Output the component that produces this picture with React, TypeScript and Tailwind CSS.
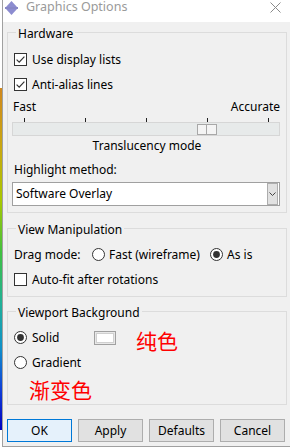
import React from "react";

function CheckBox({ checked }: { checked: boolean }) {
  return (
    <svg width="13" height="13" viewBox="0 0 13 13" className="shrink-0">
      <rect x="0.5" y="0.5" width="12" height="12" fill="#fff" stroke="#333" />
      {checked && (
        <path d="M2.6 6.6 L5.2 9.2 L10.4 3.6" fill="none" stroke="#333" strokeWidth="1.2" />
      )}
    </svg>
  );
}

function Radio({ checked }: { checked: boolean }) {
  return (
    <svg width="13" height="13" viewBox="0 0 13 13" className="shrink-0">
      <circle cx="6.5" cy="6.5" r="6" fill="#fff" stroke="#333" />
      {checked && <circle cx="6.5" cy="6.5" r="3.4" fill="#333" />}
    </svg>
  );
}

function Group({ label, children, className }: { label: string; children: React.ReactNode; className: string }) {
  return (
    <div className={"relative ml-[4px] w-[280px] border border-[#dcdcdc] " + className}>
      <span className="absolute left-[8px] top-[-7px] px-[2px] bg-[#f0f0f0] whitespace-nowrap">{label}</span>
      {children}
    </div>
  );
}

function Btn({ label, primary }: { label: string; primary?: boolean }) {
  return (
    <div
      className={
        "w-[65px] h-[23px] flex items-center justify-center border " +
        (primary ? "border-[#0078d7] bg-[#e5f1fb]" : "border-[#adadad] bg-[#e1e1e1]")
      }
    >
      {label}
    </div>
  );
}

export default function App() {
  return (
    <div className="w-[290px] h-[448px] bg-white flex overflow-hidden font-['Noto_Sans','Noto_Sans_CJK_SC',sans-serif] text-[12px] leading-[16px] text-black">
      <div className="w-[2px] flex flex-col shrink-0">
        <div className="h-[88px] bg-white" />
        <div className="h-[342px] bg-[linear-gradient(to_bottom,#d0881e,#c8a810_18%,#a8c800_33%,#40c040_48%,#20b098_63%,#1090c8_76%,#1040d8_88%,#0000c0)]" />
      </div>
      <div className="w-[288px] h-[447px] border-l border-b border-[#a0a0a0] bg-[#f0f0f0] flex flex-col shrink-0">
        {/* title bar */}
        <div className="h-[22px] bg-white flex items-start shrink-0">
          <svg width="13" height="14" viewBox="0 0 13 14" className="ml-[2px] mt-[1px] shrink-0">
            <path d="M6.5 0 L12 6 L1 6 Z" fill="#8c8cd0" />
            <rect x="0" y="6.2" width="13" height="1.6" fill="#6a6ab8" />
            <path d="M1 8 L12 8 L6.5 14 Z" fill="#8c8cd0" />
          </svg>
          <span className="ml-[8px] mt-[-1px] text-[12.5px] leading-[15px] text-[#9a9a9a] whitespace-nowrap">Graphics Options</span>
          <svg width="11" height="11" viewBox="0 0 11 11" className="ml-auto mr-[9px] mt-[2px] shrink-0">
            <path d="M0.5 0.5 L10.5 10.5 M10.5 0.5 L0.5 10.5" stroke="#8a8a8a" strokeWidth="1" />
          </svg>
        </div>

        {/* Hardware */}
        <Group label="Hardware" className="mt-[10px] pt-[14px] pb-[6px]">
          <div className="h-[25px] flex items-center pl-[6px]">
            <CheckBox checked />
            <span className="ml-[5px]">Use display lists</span>
          </div>
          <div className="h-[25px] flex items-center pl-[6px]">
            <CheckBox checked />
            <span className="ml-[5px]">Anti-alias lines</span>
          </div>
          <div className="mt-[2px] h-[16px] flex justify-between pl-[5px] pr-[6px]">
            <span>Fast</span>
            <span>Accurate</span>
          </div>
          <div className="mt-[3px] ml-[16px] w-[245px] h-[4px] flex justify-between">
            <div className="w-[1px] h-[4px] bg-[#222]" />
            <div className="w-[1px] h-[4px] bg-[#222]" />
            <div className="w-[1px] h-[4px] bg-[#222]" />
            <div className="w-[1px] h-[4px] bg-[#222]" />
            <div className="w-[1px] h-[4px] bg-[#222]" />
          </div>
          <div className="relative ml-[4px] w-[268px] h-[14px] border border-[#d6d6d6] bg-[#e7eaea]">
            <div className="absolute left-[184px] top-[1px] w-[20px] h-[11px] flex border border-[#a8a8a8] bg-[#f4f4f4]">
              <div className="w-[9px] h-full border-r border-[#a8a8a8]" />
              <div className="flex-1 h-full" />
            </div>
          </div>
          <div className="mt-[2px] h-[16px] text-center">Translucency mode</div>
          <div className="mt-[8px] h-[16px] pl-[6px]">Highlight method:</div>
          <div className="mt-[4px] ml-[4px] w-[268px] h-[24px] border border-[#a0a0a0] bg-white flex items-center">
            <span className="pl-[3px]">Software Overlay</span>
            <div className="ml-auto mr-[1px] w-[11px] h-full border border-[#adadad] bg-[#e1e1e1] flex items-center justify-center">
              <svg width="7" height="4" viewBox="0 0 7 4">
                <path d="M0.5 0.5 L3.5 3.5 L6.5 0.5" fill="none" stroke="#444" strokeWidth="1" />
              </svg>
            </div>
          </div>
        </Group>

        {/* View Manipulation */}
        <Group label="View Manipulation" className="mt-[15px] pt-[13px] pb-[4px]">
          <div className="h-[25px] flex items-center pl-[6px]">
            <span className="w-[78px] whitespace-nowrap">Drag mode:</span>
            <Radio checked={false} />
            <span className="ml-[4px] w-[101px] whitespace-nowrap">Fast (wireframe)</span>
            <Radio checked />
            <span className="ml-[4px] whitespace-nowrap">As is</span>
          </div>
          <div className="h-[25px] flex items-center pl-[6px]">
            <CheckBox checked={false} />
            <span className="ml-[5px]">Auto-fit after rotations</span>
          </div>
        </Group>

        {/* Viewport Background */}
        <Group label="Viewport Background" className="mt-[14px] pt-[13px] pb-[4px]">
          <div className="h-[25px] flex items-center pl-[6px]">
            <Radio checked />
            <span className="ml-[5px] w-[62px]">Solid</span>
            <div className="w-[22px] h-[14px] border border-[#a0a0a0] bg-[#e8e8e8] p-[1px]">
              <div className="w-full h-full bg-white border border-[#d0d0d0]" />
            </div>
            <span className="ml-[20px] mt-[5px] text-[21px] leading-[21px] text-[#ff0000] font-['Noto_Sans_CJK_SC',sans-serif]">纯色</span>
          </div>
          <div className="h-[25px] flex items-center pl-[6px]">
            <Radio checked={false} />
            <span className="ml-[5px]">Gradient</span>
          </div>
          <div className="mt-[4px] h-[21px] pl-[21px] text-[21px] leading-[21px] text-[#ff0000] font-['Noto_Sans_CJK_SC',sans-serif]">
            渐变色
          </div>
        </Group>

        {/* Buttons */}
        <div className="mt-[14px] ml-[4px] flex gap-[6px]">
          <Btn label="OK" primary />
          <Btn label="Apply" />
          <Btn label="Defaults" />
          <Btn label="Cancel" />
        </div>
      </div>
    </div>
  );
}
